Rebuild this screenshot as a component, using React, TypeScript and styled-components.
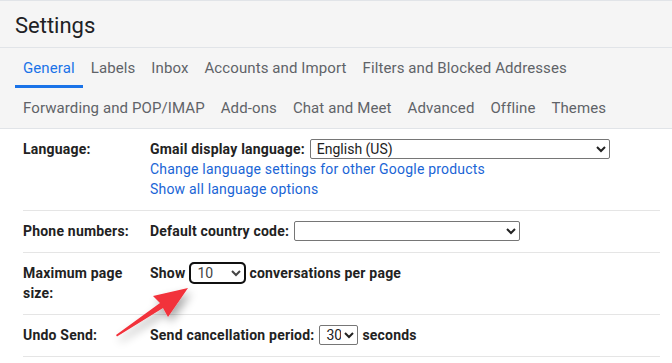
import React from "react";
import styled, {createGlobalStyle, css} from "styled-components";

const GlobalStyle = createGlobalStyle`
  html, body {
    margin: 0;
    padding: 0;
    background: #ffffff;
  }
  body {
    font-family: Roboto, "Liberation Sans", Arial, sans-serif;
    width: 672px;
    height: 363px;
    overflow: hidden;
  }
`

const topTabs = ['General', 'Labels', 'Inbox', 'Accounts and Import', 'Filters and Blocked Addresses'];
const bottomTabs = ['Forwarding and POP/IMAP', 'Add-ons', 'Chat and Meet', 'Advanced', 'Offline', 'Themes'];

const App = () =>
{
    return(
    <Page>
        <GlobalStyle/>
        <Header>
            <Title>Settings</Title>
            <TabRow>
                {topTabs.map(t => <Tab key={t} $active={t === 'General'}>{t}</Tab>)}
            </TabRow>
            <TabRow>
                {bottomTabs.map(t => <Tab key={t}>{t}</Tab>)}
            </TabRow>
        </Header>
        <Body>
            <SettingRow>
                <Label>Language:</Label>
                <Value>
                    <Line>
                        Gmail display language:
                        <Select $width={300} defaultValue="en">
                            <option value="en">English (US)</option>
                        </Select>
                    </Line>
                    <Link>Change language settings for other Google products</Link>
                    <Link>Show all language options</Link>
                </Value>
            </SettingRow>
            <SettingRow>
                <Label>Phone numbers:</Label>
                <Value>
                    <Line>
                        Default country code:
                        <Select $width={226} defaultValue="">
                            <option value=""></option>
                        </Select>
                    </Line>
                </Value>
            </SettingRow>
            <SettingRow>
                <Label>Maximum page size:</Label>
                <Value>
                    <Line>
                        Show
                        <Select $width={55} $focused defaultValue="10">
                            <option value="10">10</option>
                        </Select>
                        conversations per page
                    </Line>
                </Value>
            </SettingRow>
            <SettingRow>
                <Label>Undo Send:</Label>
                <Value>
                    <Line>
                        Send cancellation period:
                        <Select $width={39} defaultValue="30">
                            <option value="30">30</option>
                        </Select>
                        seconds
                    </Line>
                </Value>
            </SettingRow>
        </Body>
        <PointerArrow/>
    </Page>
    )
}

const PointerArrow = () =>
{
    return(
        <ArrowSvg width="120" height="90" viewBox="100 270 120 90">
            <defs>
                <filter id="arrowShadow" x="-50%" y="-50%" width="200%" height="200%">
                    <feGaussianBlur in="SourceAlpha" stdDeviation="5"/>
                    <feOffset dx="3" dy="5"/>
                    <feComponentTransfer>
                        <feFuncA type="linear" slope="0.35"/>
                    </feComponentTransfer>
                    <feMerge>
                        <feMergeNode/>
                        <feMergeNode in="SourceGraphic"/>
                    </feMerge>
                </filter>
            </defs>
            <path
                filter="url(#arrowShadow)"
                fill="#f2303a"
                d="M188 288 L153 296 L160 303 L116 335 L117 336.5 L163 308 L168 317 Z"
            />
        </ArrowSvg>
    )
}

const Page = styled.div`
  position: relative;
  width: 672px;
  height: 363px;
  background: #ffffff;
  overflow: hidden;
`

const Header = styled.div`
  background: #f5f5f5;
  border-top: 1px solid #e1e4e8;
  border-bottom: 1px solid #e1e4e8;
  box-sizing: border-box;
  height: 129px;
`

const Title = styled.h1`
  margin: 0;
  height: 47px;
  padding: 3px 0 0 15px;
  box-sizing: border-box;
  border-bottom: 1px solid #e1e4e8;
  font-family: Roboto, "Open Sans", sans-serif;
  font-weight: 400;
  font-size: 22px;
  line-height: 43px;
  color: #202124;
`

const TabRow = styled.div`
  display: flex;
  padding-left: 15px;
  height: 40px;
`

const Tab = styled.div<{$active?: boolean}>`
  padding: 0 8px;
  font-family: Roboto, "Open Sans", sans-serif;
  font-size: 15px;
  letter-spacing: 0.1px;
  line-height: 40px;
  white-space: nowrap;
  color: #5f6368;
  box-sizing: border-box;

  ${p => p.$active && css`
    color: #1a73e8;
    border-bottom: 3px solid #1a73e8;
  `}
`

const Body = styled.div`
  padding: 0 12px 0 23px;
`

const SettingRow = styled.div`
  display: flex;
  padding: 10px 0 11px;
  border-bottom: 1px solid #e5e5e5;
`

const Label = styled.div`
  width: 127px;
  flex-shrink: 0;
  padding-right: 12px;
  box-sizing: border-box;
  font-size: 14px;
  font-weight: 700;
  letter-spacing: 0.2px;
  line-height: 20px;
  color: #222222;
`

const Value = styled.div`
  display: flex;
  flex-direction: column;
  font-size: 14px;
  line-height: 20px;
  letter-spacing: 0.2px;
`

const Line = styled.div`
  display: flex;
  align-items: center;
  gap: 4px;
  height: 20px;
  font-weight: 700;
  color: #222222;
  white-space: nowrap;
`

const Link = styled.a`
  color: #1a65d6;
  font-size: 14px;
  line-height: 20px;
  cursor: pointer;
`

const Select = styled.select<{$width: number, $focused?: boolean}>`
  width: ${p => p.$width}px;
  height: 20px;
  box-sizing: border-box;
  font-family: Roboto, "Liberation Sans", sans-serif;
  font-size: 14px;
  font-weight: 400;
  letter-spacing: 0;
  color: #222222;
  background: #ffffff;
  border: 1px solid #767676;
  border-radius: 2px;
  padding: 0 0 0 2px;
  margin: 0 0 0 1px;

  ${p => p.$focused && css`
    outline: 2px solid #101010;
    outline-offset: -1px;
    border-radius: 4px;
    color: #444444;
  `}
`

const ArrowSvg = styled.svg`
  position: absolute;
  left: 100px;
  top: 270px;
  overflow: visible;
  pointer-events: none;
`

export default App;
